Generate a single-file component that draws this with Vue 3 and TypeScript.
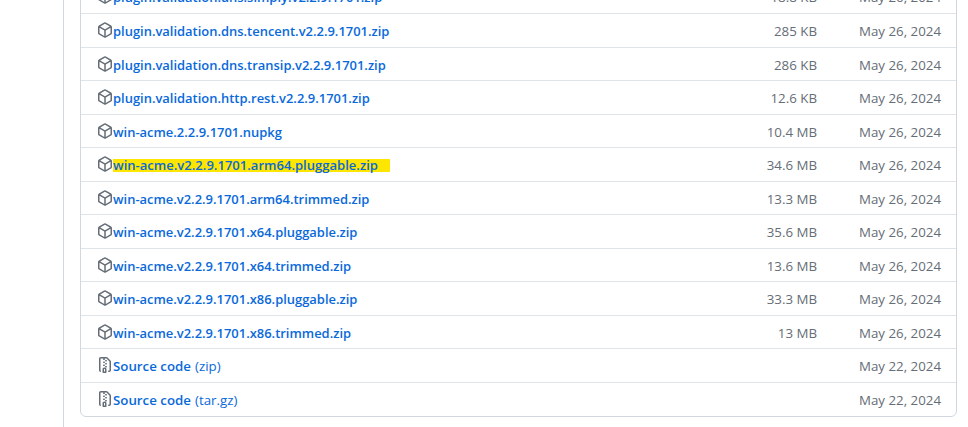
<script setup lang="ts">
interface Asset {
  name: string;
  size?: string;
  date: string;
  suffix?: string;
  mark?: boolean;
}
const v = "v2.2.9.1701";
const assets: Asset[] = [
  { name: `plugin.validation.dns.simply.${v}.zip`, size: "18.8 KB", date: "May 26, 2024" },
  { name: `plugin.validation.dns.tencent.${v}.zip`, size: "285 KB", date: "May 26, 2024" },
  { name: `plugin.validation.dns.transip.${v}.zip`, size: "286 KB", date: "May 26, 2024" },
  { name: `plugin.validation.http.rest.${v}.zip`, size: "12.6 KB", date: "May 26, 2024" },
  { name: "win-acme.2.2.9.1701.nupkg", size: "10.4 MB", date: "May 26, 2024" },
  { name: `win-acme.${v}.arm64.pluggable.zip`, size: "34.6 MB", date: "May 26, 2024", mark: true },
  { name: `win-acme.${v}.arm64.trimmed.zip`, size: "13.3 MB", date: "May 26, 2024" },
  { name: `win-acme.${v}.x64.pluggable.zip`, size: "35.6 MB", date: "May 26, 2024" },
  { name: `win-acme.${v}.x64.trimmed.zip`, size: "13.6 MB", date: "May 26, 2024" },
  { name: `win-acme.${v}.x86.pluggable.zip`, size: "33.3 MB", date: "May 26, 2024" },
  { name: `win-acme.${v}.x86.trimmed.zip`, size: "13 MB", date: "May 26, 2024" },
  { name: "Source code", suffix: "(zip)", date: "May 22, 2024" },
  { name: "Source code", suffix: "(tar.gz)", date: "May 22, 2024" },
];
const pkg = "m8.878.392 5.25 3.045c.54.314.872.89.872 1.514v6.098a1.75 1.75 0 0 1-.872 1.514l-5.25 3.045a1.75 1.75 0 0 1-1.756 0l-5.25-3.045A1.75 1.75 0 0 1 1 11.049V4.951c0-.624.332-1.201.872-1.514L7.122.392a1.75 1.75 0 0 1 1.756 0ZM7.875 1.69l-4.63 2.685L8 7.133l4.755-2.758-4.63-2.685a.248.248 0 0 0-.25 0ZM2.5 5.677v5.372c0 .09.047.171.125.216l4.625 2.683V8.432Zm6.25 8.271 4.625-2.683a.25.25 0 0 0 .125-.216V5.677L8.75 8.432Z";
const zip = "M3.5 1.75v11.5c0 .09.048.173.126.217a.75.75 0 0 1-.752 1.298A1.748 1.748 0 0 1 2 13.25V1.75C2 .784 2.784 0 3.75 0h5.586c.464 0 .909.185 1.237.513l2.914 2.914c.329.328.513.773.513 1.237v8.586A1.75 1.75 0 0 1 12.25 15h-.5a.75.75 0 0 1 0-1.5h.5a.25.25 0 0 0 .25-.25V4.664a.25.25 0 0 0-.073-.177L9.513 1.573a.25.25 0 0 0-.177-.073H7.25a.75.75 0 0 1 0 1.5h-.5a.75.75 0 0 1 0-1.5h-3a.25.25 0 0 0-.25.25Zm3.75 8.75h.5c.966 0 1.75.784 1.75 1.75v3a.75.75 0 0 1-.75.75h-2.5a.75.75 0 0 1-.75-.75v-3c0-.966.784-1.75 1.75-1.75ZM6 5.25a.75.75 0 0 1 .75-.75h.5a.75.75 0 0 1 0 1.5h-.5A.75.75 0 0 1 6 5.25Zm.75 2.25h.5a.75.75 0 0 1 0 1.5h-.5a.75.75 0 0 1 0-1.5ZM8 6.75A.75.75 0 0 1 8.75 6h.5a.75.75 0 0 1 0 1.5h-.5A.75.75 0 0 1 8 6.75ZM8.75 3h.5a.75.75 0 0 1 0 1.5h-.5a.75.75 0 0 1 0-1.5ZM8 9.75A.75.75 0 0 1 8.75 9h.5a.75.75 0 0 1 0 1.5h-.5A.75.75 0 0 1 8 9.75Zm-1 2.5v2.25h1v-2.25a.25.25 0 0 0-.25-.25h-.5a.25.25 0 0 0-.25.25Z";
</script>

<template>
  <div class="page">
    <div class="timeline">
      <ul class="box">
        <li v-for="a in assets" :key="a.name + a.suffix" class="row">
          <div class="name">
            <svg class="icon" width="16" height="16" viewBox="0 0 16 16" fill="currentColor" aria-hidden="true">
              <path :d="a.suffix ? zip : pkg" />
            </svg>
            <a class="link" :class="{ mark: a.mark, source: a.suffix }" href="#" @click.prevent>{{ a.name }}</a>
            <span v-if="a.suffix" class="suffix">{{ a.suffix }}</span>
          </div>
          <span class="size">{{ a.size }}</span>
          <span class="date">{{ a.date }}</span>
        </li>
      </ul>
    </div>
  </div>
</template>

<style>
html, body { margin: 0; background: #fff; }
</style>

<style scoped>
.page {
  width: 968px;
  height: 427px;
  overflow: hidden;
  background: #fff;
  font-family: "Open Sans", "Noto Sans", sans-serif;
  font-size: 13.3px;
  color: #656d76;
}
.timeline {
  display: flow-root;
  margin-left: 63px;
  width: 894px;
  height: 427px;
  box-sizing: border-box;
  padding-left: 16px;
  border-left: 1px solid #d0d7de;
}
.box {
  list-style: none;
  margin: -21.5px 0 0;
  padding: 0 0 1px;
  border: 1px solid #d0d7de;
  border-radius: 6px;
  background: #fff;
}
.row {
  display: flex;
  align-items: center;
  box-sizing: border-box;
  height: 33.5px;
  padding: 2px 15px 0 16px;
  border-top: 1px solid #dfe4e9;
}
.row:first-child { border-top: 0; }
.name {
  display: flex;
  align-items: center;
  flex: 1;
  min-width: 0;
}
.icon {
  flex: none;
  margin-bottom: 2px;
  color: #656d76;
}
.link {
  color: #0969da;
  font-size: 12.95px;
  font-weight: 600;
  text-decoration: none;
  white-space: nowrap;
}
.source { font-size: 13.3px; }
.mark {
  font-size: 13.05px;
  background: #ffe600;
  line-height: 13px;
  padding-right: 12px;
}
.suffix {
  color: #0969da;
  margin-left: 4px;
}
.size {
  width: 91px;
  text-align: right;
  white-space: nowrap;
}
.date {
  width: 124px;
  text-align: right;
  white-space: nowrap;
}
</style>
